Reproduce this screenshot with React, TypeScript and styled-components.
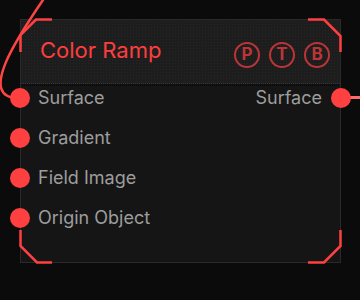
import React from "react";
import styled, { createGlobalStyle } from "styled-components";

const Global = createGlobalStyle`
  html, body { margin: 0; padding: 0; background: #0b0b0b; }
  body { font-family: Inter, "Noto Sans", "Liberation Sans", sans-serif; }
`;

const Canvas = styled.div`
  width: 360px;
  height: 300px;
  box-sizing: border-box;
  padding: 19px 0 0 20px;
  background: #0b0b0b;
  overflow: hidden;
  position: relative;
`;

const Node = styled.div`
  position: relative;
  width: 321px;
  height: 244px;
  box-sizing: border-box;
  border: 1px solid #2a2a2a;
  background: #151515;
  display: flex;
  flex-direction: column;
`;

const Header = styled.div`
  height: 63px;
  flex: none;
  display: flex;
  align-items: center;
  justify-content: space-between;
  padding: 0 10px 0 19px;
  background-color: #1d1d1d;
  background-image: radial-gradient(circle, #262626 0.7px, transparent 0.9px);
  background-size: 3px 3px;
  border-bottom: 1px dotted #383838;
`;

const Title = styled.div`
  color: #ff3d3d;
  font-size: 22px;
  font-weight: 400;
  margin-top: -4px;
`;

const Badges = styled.div`
  display: flex;
  gap: 9px;
  margin-top: 6px;
`;

const Badge = styled.div`
  width: 26px;
  height: 26px;
  box-sizing: border-box;
  border: 2px solid #bb3538;
  border-radius: 50%;
  color: #bb3538;
  font-weight: 700;
  font-size: 17px;
  display: flex;
  align-items: center;
  justify-content: center;
  line-height: 1;
`;

const Body = styled.div`
  border-top: 2px solid #0f0f0f;
  padding-top: 2px;
  display: flex;
  flex-direction: column;
  gap: 20px;
  flex: 1;
`;

const Row = styled.div<{ $out?: boolean }>`
  position: relative;
  height: 20px;
  display: flex;
  align-items: center;
  justify-content: ${(p) => (p.$out ? "space-between" : "flex-start")};
  padding: 0 18px 0 17px;
  color: #9d9d9d;
  font-size: 18px;
`;

const Socket = styled.span<{ $side: "left" | "right" }>`
  position: absolute;
  top: 0;
  ${(p) => (p.$side === "left" ? "left: -11px;" : "right: -11px;")}
  width: 20px;
  height: 20px;
  border-radius: 50%;
  background: #ff4040;
  z-index: 3;
`;

const Overlay = styled.svg`
  position: absolute;
  left: -1px;
  top: -1px;
  overflow: visible;
  pointer-events: none;
  z-index: 2;
`;

const Label = styled.span`
  margin-top: -2px;
`;

const inputs = ["Gradient", "Field Image", "Origin Object"];

export default function App() {
  return (
    <Canvas>
      <Global />
      <Node>
        <Overlay width={321} height={244} viewBox="0 0 321 244">
          <g fill="none" stroke="#ff4040" strokeWidth={2.5} strokeLinejoin="miter">
            <path d="M32 0.5 L16 0.5 L0.5 16 L0.5 33" />
            <path d="M288 0.5 L304 0.5 L320.5 17 L320.5 33" />
            <path d="M0.5 211 L0.5 227 L17 243.5 L32 243.5" />
            <path d="M320.5 211 L320.5 227 L304 243.5 L288 243.5" />
          </g>
          <path
            d="M23 -19 C -1 16, -45 81, 0 79"
            fill="none"
            stroke="#ff4444"
            strokeWidth={2.5}
            strokeLinecap="round"
          />
          <path d="M320 78.5 L345 78.5" stroke="#ff6a6a" strokeWidth={3} />
        </Overlay>
        <Header>
          <Title>Color Ramp</Title>
          <Badges>
            <Badge>P</Badge>
            <Badge>T</Badge>
            <Badge>B</Badge>
          </Badges>
        </Header>
        <Body>
          <Row $out>
            <Socket $side="left" />
            <Label>Surface</Label>
            <Label>Surface</Label>
            <Socket $side="right" />
          </Row>
          {inputs.map((name) => (
            <Row key={name}>
              <Socket $side="left" />
              <Label>{name}</Label>
            </Row>
          ))}
        </Body>
      </Node>
    </Canvas>
  );
}
